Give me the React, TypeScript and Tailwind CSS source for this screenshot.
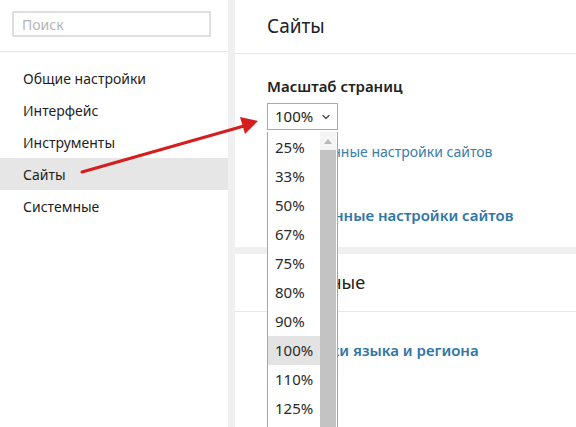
import { ChevronDown } from "lucide-react";

const navItems = ["Общие настройки", "Интерфейс", "Инструменты", "Сайты", "Системные"];
const zoomLevels = ["25%", "33%", "50%", "67%", "75%", "80%", "90%", "100%", "110%", "125%"];

function Sidebar() {
  return (
    <aside className="w-[228px] shrink-0 bg-white">
      {/* Search */}
      <div className="h-[52px] border-b border-[#e6e6e6] px-[12px] pt-[11px]">
        <div className="h-[26px] w-[199px] border-2 border-[#dedede] flex items-center pl-[8px] text-[14px] text-[#b5b5b5]">
          Поиск
        </div>
      </div>

      {/* Nav */}
      <nav className="mt-[10px] flex flex-col">
        {navItems.map((item) => (
          <div
            key={item}
            className={
              item === "Сайты"
                ? "h-8 flex items-center px-[23px] text-[14px] text-[#1f1f1f] bg-[#e6e6e6]"
                : "h-8 flex items-center px-[23px] text-[14px] text-[#1f1f1f]"
            }
          >
            {item}
          </div>
        ))}
      </nav>
    </aside>
  );
}

function ZoomDropdown() {
  return (
    <div className="absolute left-[267px] top-[132px] w-[71px] h-[300px] bg-white border-x border-[#a5a5a5] flex">
      <div className="w-[52px] flex flex-col pt-[1px]">
        {zoomLevels.map((z) => (
          <div
            key={z}
            className={
              z === "100%"
                ? "h-[29px] shrink-0 flex items-center pl-[7px] text-[15px] text-[#2a2a2a] bg-[#e3e3e3]"
                : "h-[29px] shrink-0 flex items-center pl-[7px] text-[15px] text-[#2a2a2a]"
            }
          >
            {z}
          </div>
        ))}
      </div>
      {/* scrollbar */}
      <div className="w-[16px] flex flex-col">
        <div className="h-[18px] flex items-center justify-center bg-[#f4f4f4]">
          <svg width="8" height="5" viewBox="0 0 8 5">
            <path d="M0 5 L4 0 L8 5 Z" fill="#b8b8b8" />
          </svg>
        </div>
        <div className="flex-1 bg-[#c3c3c3]" />
      </div>
    </div>
  );
}

function Arrow() {
  return (
    <svg className="absolute left-0 top-0 pointer-events-none" width="576" height="427">
      <line x1="82" y1="172" x2="244" y2="126" stroke="#d71e1e" strokeWidth="3" strokeLinecap="round" />
      <path d="M258 121 L240 117 L245 134 Z" fill="#d71e1e" />
    </svg>
  );
}

export default function App() {
  return (
    <div
      className="relative w-[576px] h-[427px] overflow-hidden flex bg-[#f0f0f0]"
      style={{ fontFamily: '"Noto Sans", "Open Sans", sans-serif' }}
    >
      <Sidebar />

      <main className="flex-1 pl-[7px] flex flex-col gap-[7px]">
        {/* Sites card */}
        <section className="bg-white h-[247px]">
          <div className="h-[54px] border-b border-[#e6e6e6] flex items-center pl-[32px] text-[19px] text-[#222]">
            Сайты
          </div>
          <div className="pl-[32px] pt-[22px]">
            <div className="text-[15px] font-semibold text-[#222] leading-5">Масштаб страниц</div>
            <div className="mt-[7px] w-[71px] h-[27px] border border-[#a9a9a9] flex items-center justify-between pl-[7px] pr-[5px] text-[15px] text-[#222]">
              100%
              <ChevronDown className="w-3 h-3 text-[#555]" strokeWidth={3} />
            </div>
            <div className="mt-[12px] ml-[5px] text-[14px] text-[#3a7cab] leading-5">Расширенные настройки сайтов</div>
            <div className="mt-[43px] text-[15px] font-semibold text-[#2f76a8] leading-5">Расширенные настройки сайтов</div>
          </div>
        </section>

        {/* System card */}
        <section className="bg-white flex-1">
          <div className="h-[58px] border-b border-[#e6e6e6] flex items-center pl-[32px] text-[18px] text-[#222]">
            Системные
          </div>
          <div className="pl-[32px] pt-[28px] text-[15px] font-semibold text-[#2f76a8] leading-5">
            Настройки языка и региона
          </div>
        </section>
      </main>

      <ZoomDropdown />
      <Arrow />
    </div>
  );
}
